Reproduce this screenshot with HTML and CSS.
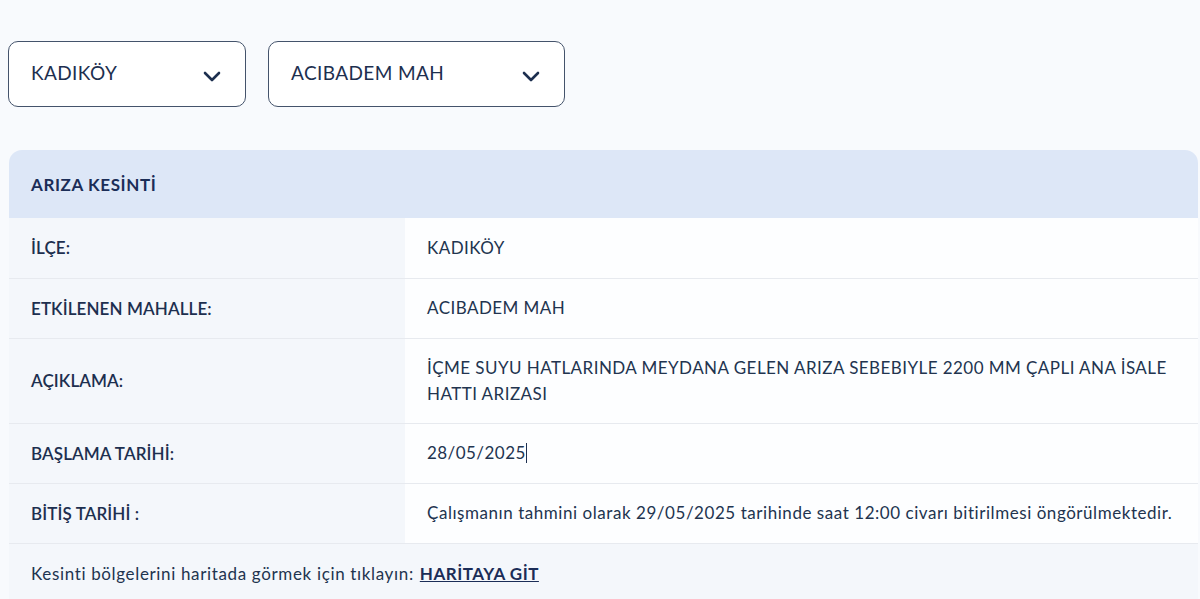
FILE: index.html
```html
<!DOCTYPE html>
<html lang="tr">

<head>
  <meta charset="UTF-8">
  <meta name="viewport" content="width=device-width, initial-scale=1.0">
  <title>Arıza Kesinti</title>
  <link rel="stylesheet" href="styles.css">
</head>

<body>
  <div class="page">
    <div class="filters">
      <div class="select select-ilce">
        <span>KADIKÖY</span>
        <svg class="chev" width="18" height="11" viewBox="0 0 18 11"><path d="M2 2l7 7 7-7" fill="none" stroke="#1d2f4f" stroke-width="2.6" stroke-linecap="round" stroke-linejoin="round"/></svg>
      </div>
      <div class="select select-mah">
        <span>ACIBADEM MAH</span>
        <svg class="chev" width="18" height="11" viewBox="0 0 18 11"><path d="M2 2l7 7 7-7" fill="none" stroke="#1d2f4f" stroke-width="2.6" stroke-linecap="round" stroke-linejoin="round"/></svg>
      </div>
    </div>

    <div class="card">
      <div class="card-head">ARIZA KESİNTİ</div>
      <table class="info">
        <tr>
          <th>İLÇE:</th>
          <td>KADIKÖY</td>
        </tr>
        <tr>
          <th>ETKİLENEN MAHALLE:</th>
          <td>ACIBADEM MAH</td>
        </tr>
        <tr class="tall">
          <th>AÇIKLAMA:</th>
          <td>İÇME SUYU HATLARINDA MEYDANA GELEN ARIZA SEBEBIYLE 2200 MM ÇAPLI ANA İSALE HATTI ARIZASI</td>
        </tr>
        <tr>
          <th>BAŞLAMA TARİHİ:</th>
          <td>28/05/2025<span class="caret"></span></td>
        </tr>
        <tr>
          <th>BİTİŞ TARİHİ :</th>
          <td class="note">Çalışmanın tahmini olarak 29/05/2025 tarihinde saat 12:00 civarı bitirilmesi öngörülmektedir.</td>
        </tr>
      </table>
      <div class="card-foot">Kesinti bölgelerini haritada görmek için tıklayın: <a href="#">HARİTAYA GİT</a></div>
    </div>
  </div>
</body>

</html>
```

FILE: styles.css
```css
* {
  box-sizing: border-box;
}

body {
  margin: 0;
  background: #f8fafd;
  font-family: Lato, "Noto Sans", sans-serif;
  color: #1d2f4f;
}

.page {
  padding: 41px 2px 0 8px;
}

.filters {
  display: flex;
  gap: 22px;
}

.select {
  height: 66px;
  border: 1.5px solid #44536b;
  border-radius: 10px;
  background: #fff;
  display: flex;
  align-items: center;
  justify-content: space-between;
  padding: 0 24px 0 22px;
  font-size: 19px;
  letter-spacing: 0.4px;
  color: #1d2f4f;
}

.select span {
  margin-top: -4px;
}

.select-ilce {
  width: 238px;
}

.select-mah {
  width: 297px;
}

.chev {
  margin-top: 4px;
}

.card {
  margin: 43px 0 0 1px;
  border-radius: 13px 13px 0 0;
  overflow: hidden;
}

.card-head {
  height: 68px;
  background: #dde7f7;
  padding: 0 22px;
  display: flex;
  align-items: center;
  font-weight: 700;
  font-size: 17px;
  letter-spacing: 0.6px;
  color: #1b2d57;
}

.info {
  width: 100%;
  border-collapse: collapse;
  font-size: 17px;
}

.info tr {
  height: 60px;
  border-bottom: 1px solid #e7eaef;
}

.info tr.tall {
  height: 85px;
}

.info th {
  width: 396px;
  text-align: left;
  font-weight: 600;
  letter-spacing: 0.1px;
  padding: 0 22px;
  background: #f4f7fb;
  color: #1d2f4f;
}

.info td {
  padding: 0 22px;
  background: #fdfeff;
  line-height: 26px;
  letter-spacing: 0.45px;
  color: #22344f;
}

/* lowercase sentence runs a touch wider */
.info td.note {
  letter-spacing: 0.55px;
}

.caret {
  display: inline-block;
  width: 1px;
  height: 20px;
  background: #1d2f4f;
  vertical-align: -4px;
}

.card-foot {
  height: 60px;
  background: #f4f7fb;
  padding: 0 22px;
  display: flex;
  align-items: center;
  font-size: 17px;
  letter-spacing: 0.65px;
  color: #22344f;
}

.card-foot a {
  color: #1b2d57;
  font-weight: 700;
  letter-spacing: 0.5px;
  margin-left: 6px;
}
```
